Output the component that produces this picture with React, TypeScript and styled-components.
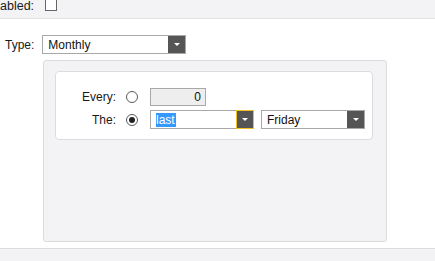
import React from "react";
import styled, { createGlobalStyle } from "styled-components";

const Global = createGlobalStyle`
  html, body { margin: 0; padding: 0; background: #fff; }
  body { font-family: "Liberation Sans", Arial, sans-serif; font-size: 12px; color: #1a1a1a; width: 435px; height: 261px; overflow: hidden; }
`;

const Page = styled.div`
  display: flex;
  flex-direction: column;
  height: 261px;
`;

const TopBar = styled.div`
  height: 18px;
  background: #f3f3f5;
  border-bottom: 1px solid #e2e2e4;
  display: flex;
  align-items: flex-start;
  gap: 11px;
`;

const Label = styled.span`
  line-height: 14px;
  color: #1a1a1a;
`;

const TopLabel = styled(Label)`
  font-size: 12.5px;
  line-height: 13px;
`;

const CheckBox = styled.span`
  display: inline-block;
  width: 12px;
  height: 13px;
  margin-top: -2px;
  border: 1px solid #666;
  background: #fff;
  box-sizing: border-box;
`;

const TypeRow = styled.div`
  display: flex;
  align-items: center;
  margin-top: 16px;
  padding-left: 5px;
  gap: 8px;
`;

const SelectBox = styled.div<{ $w: number }>`
  width: ${(p) => p.$w}px;
  height: 19px;
  box-sizing: border-box;
  border: 1px solid #a8a8a8;
  background: #fff;
  display: flex;
  align-items: stretch;
`;

const SelectText = styled.div`
  flex: 1;
  display: flex;
  align-items: center;
  padding-left: 5px;
  color: #111;
`;

const Highlight = styled.span`
  background: #3399ff;
  color: #fff;
  line-height: 14px;
  padding: 0 1px 0 0;
`;

const SelectButton = styled.div<{ $focus?: boolean }>`
  background: #555555;
  display: flex;
  align-items: center;
  justify-content: center;
  box-sizing: border-box;
  border: ${(p) => (p.$focus ? "1px solid #f0c020" : "none")};
  margin: ${(p) => (p.$focus ? "-1px -1px -1px 0" : "0")};
  width: ${(p) => (p.$focus ? "18px" : "17px")};
`;

const Arrow = () => (
  <svg width="6" height="3" viewBox="0 0 6 3">
    <path d="M0 0H6L3 3Z" fill="#fff" />
  </svg>
);

const Panel = styled.div`
  margin-top: 6px;
  margin-left: 43px;
  width: 344px;
  height: 182px;
  box-sizing: border-box;
  background: #f3f3f5;
  border: 1px solid #dcdcde;
  border-radius: 3px;
  padding: 10px 13px 0 11px;
`;

const Card = styled.div`
  height: 69px;
  box-sizing: border-box;
  background: #fff;
  border: 1px solid #dcdcde;
  border-radius: 4px;
  padding-top: 15px;
  display: grid;
  grid-template-columns: 60px 34px auto;
  grid-auto-rows: 19px;
  row-gap: 4px;
  align-items: center;
`;

const RowLabel = styled.span`
  text-align: right;
  color: #1a1a1a;
`;

const Radio = styled.span<{ $checked?: boolean }>`
  width: 12px;
  height: 12px;
  box-sizing: border-box;
  border: 1px solid #5a5a5a;
  border-radius: 50%;
  margin-left: 10px;
  display: flex;
  align-items: center;
  justify-content: center;
  background: #fff;
  &::after {
    content: "";
    display: ${(p) => (p.$checked ? "block" : "none")};
    width: 6px;
    height: 6px;
    border-radius: 50%;
    background: #222;
  }
`;

const Controls = styled.div`
  display: flex;
  gap: 7px;
  align-items: center;
`;

const NumberInput = styled.div`
  width: 56px;
  height: 18px;
  box-sizing: border-box;
  border: 1px solid #a8a8a8;
  background: #eeeeee;
  text-align: right;
  padding-right: 4px;
  line-height: 16px;
  color: #111;
`;

const BottomBar = styled.div`
  margin-top: 6px;
  flex: 1;
  background: #f3f3f5;
  border-top: 1px solid #dcdcde;
`;

export default function App() {
  return (
    <>
      <Global />
      <Page>
        <TopBar>
          <TopLabel>abled:</TopLabel>
          <CheckBox />
        </TopBar>
        <TypeRow>
          <Label>Type:</Label>
          <SelectBox $w={144}>
            <SelectText>Monthly</SelectText>
            <SelectButton>
              <Arrow />
            </SelectButton>
          </SelectBox>
        </TypeRow>
        <Panel>
          <Card>
            <RowLabel>Every:</RowLabel>
            <Radio />
            <Controls>
              <NumberInput>0</NumberInput>
            </Controls>
            <RowLabel>The:</RowLabel>
            <Radio $checked />
            <Controls>
              <SelectBox $w={104}>
                <SelectText>
                  <Highlight>last</Highlight>
                </SelectText>
                <SelectButton $focus>
                  <Arrow />
                </SelectButton>
              </SelectBox>
              <SelectBox $w={104}>
                <SelectText>Friday</SelectText>
                <SelectButton>
                  <Arrow />
                </SelectButton>
              </SelectBox>
            </Controls>
          </Card>
        </Panel>
        <BottomBar />
      </Page>
    </>
  );
}
